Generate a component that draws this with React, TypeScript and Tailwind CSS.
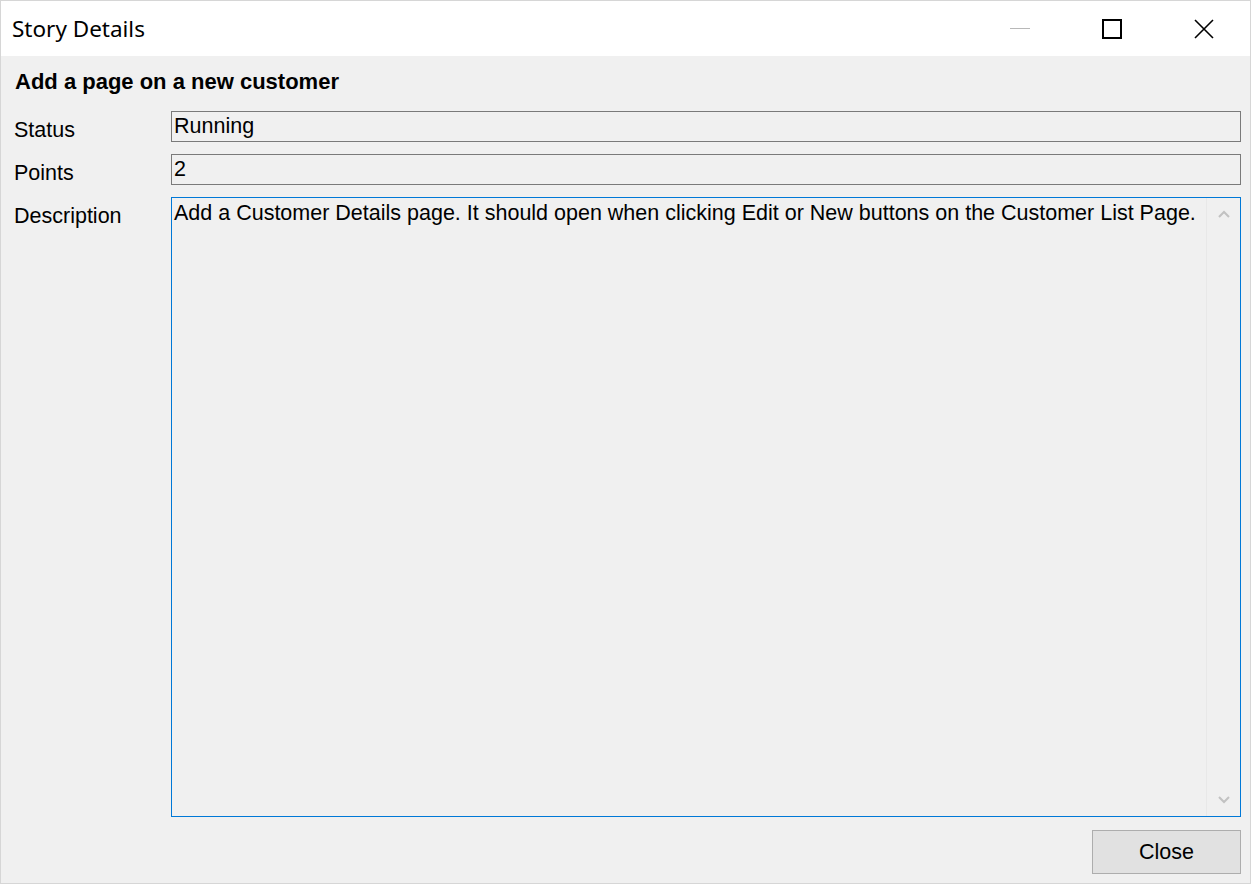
import React from "react";

export default function App() {
  return (
    <div className="w-[1251px] h-[884px] border border-[#d6d6d6] bg-[#f0f0f0] flex flex-col overflow-hidden">
      {/* Title bar */}
      <div className="h-[55px] bg-white flex items-center shrink-0">
        <div className="pl-[11px] text-[22.5px] leading-[30px] text-black flex-1" style={{ fontFamily: '"Noto Sans", sans-serif' }}>
          Story Details
        </div>
        <div className="flex h-full items-center">
          <div className="w-[92px] h-full flex items-center justify-center">
            <div className="w-[20px] h-px bg-[#b8b8b8]" />
          </div>
          <div className="w-[92px] h-full flex items-center justify-center">
            <div className="w-[20px] h-[20px] border-2 border-black" />
          </div>
          <div className="w-[92px] h-full flex items-center justify-center">
            <svg width="20" height="20" viewBox="0 0 20 20">
              <path d="M1 1 L19 19 M19 1 L1 19" stroke="black" strokeWidth="1.6" fill="none" />
            </svg>
          </div>
        </div>
      </div>

      {/* Body */}
      <div
        className="flex-1 flex flex-col pr-[9px] text-[21.5px] text-black"
        style={{ fontFamily: '"Liberation Sans", Arial, sans-serif' }}
      >
        <div className="pt-[14px] pl-[14px] leading-[24px] font-bold text-[22px] h-[55px]">Add a page on a new customer</div>

        <div className="flex h-[31px]">
          <div className="w-[170px] pl-[13px] pt-[7px] leading-[24px]">Status</div>
          <div className="flex-1 border border-[#7a7a7a] pl-[2px] leading-[28px]">Running</div>
        </div>

        <div className="flex h-[31px] mt-[12px]">
          <div className="w-[170px] pl-[13px] pt-[7px] leading-[24px]">Points</div>
          <div className="flex-1 border border-[#7a7a7a] pl-[2px] leading-[28px]">2</div>
        </div>

        <div className="flex h-[620px] mt-[12px]">
          <div className="w-[170px] pl-[13px] pt-[7px] leading-[24px]">Description</div>
          <div className="flex-1 border border-[#0078d7] flex">
            <div className="flex-1 pl-[2px] pt-[3px] leading-[24px]">
              Add a Customer Details page. It should open when clicking Edit or New buttons on the Customer List Page.
            </div>
            <div className="w-[34px] border-l border-[#e8e8e8] flex flex-col justify-between items-center py-[12px]">
              <svg width="12" height="8" viewBox="0 0 12 8">
                <path d="M1 7 L6 2 L11 7" stroke="#c2c2c2" strokeWidth="2" fill="none" />
              </svg>
              <svg width="12" height="8" viewBox="0 0 12 8">
                <path d="M1 1 L6 6 L11 1" stroke="#c2c2c2" strokeWidth="2" fill="none" />
              </svg>
            </div>
          </div>
        </div>

        <div className="flex justify-end mt-[13px]">
          <button className="w-[149px] h-[44px] border border-[#adadad] bg-[#e1e1e1] text-[21.5px] leading-[24px] text-black">
            Close
          </button>
        </div>
      </div>
    </div>
  );
}
